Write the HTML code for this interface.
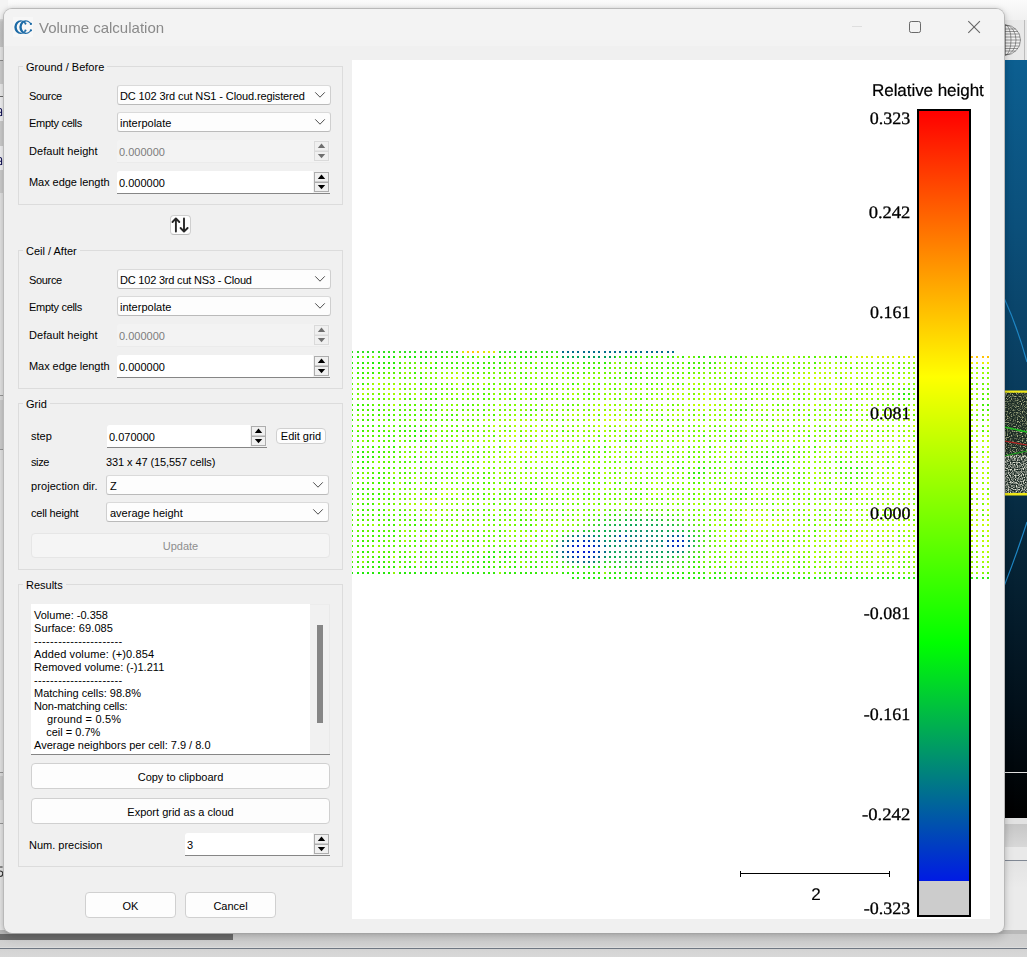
<!DOCTYPE html>
<html><head><meta charset="utf-8"><title>Volume calculation</title>
<style>
*{box-sizing:border-box;margin:0;padding:0}
html,body{width:1027px;height:957px;overflow:hidden}
body{position:relative;background:#e4e4e4;font-family:"Liberation Sans",sans-serif;font-size:11px;color:#000}
.a{position:absolute}
#dlg{position:absolute;left:3px;top:8px;width:1002px;height:926px;background:#f0f0f0;border:1px solid #b9b9b9;border-bottom-color:#a4a4a4;border-radius:9px;box-shadow:0 3px 10px rgba(0,0,0,.16),0 0 4px rgba(0,0,0,.10)}
#tbar{position:absolute;left:4px;top:9px;width:1000px;height:37px;background:#f3f3f3;border-radius:8px 8px 0 0}
#title{opacity:.999;position:absolute;left:39px;top:19px;font-size:15px;line-height:17px;color:#8a8a8a;white-space:pre}
.gb{position:absolute;border:1px solid #dcdcdc}
.gt{position:absolute;background:#f0f0f0;padding:0 3px;white-space:pre;line-height:13px}
.lb{position:absolute;white-space:pre;line-height:13px}
.cb{position:absolute;background:#fdfdfd;border:1px solid #cfcfcf;border-top-color:#dadada;border-bottom-color:#bababa;border-radius:3px}
.sp{position:absolute;background:#fff;border-bottom:1px solid #868686;border-radius:3px 3px 0 0}
.sp.dis{background:#f3f3f3;border-bottom:1px solid #ebebeb}
.btn{position:absolute;background:#fdfdfd;border:1px solid #d0d0d0;border-radius:4px}
.ctr{text-align:center}
.sv{opacity:.999;font-family:"Liberation Serif",serif;font-size:17.5px;line-height:20px;white-space:pre;letter-spacing:0;-webkit-text-stroke:0.3px #000;text-rendering:geometricPrecision;transform:translateY(-0.45px) scaleX(1.025);transform-origin:100% 50%}
</style></head><body>
<div class="a" style="left:0;top:0;width:1027px;height:60px;background:linear-gradient(180deg,#fbfbfb 0,#f6f6f6 10px,#f1f1f1 20px,#ececec 60px)"></div>
<div class="a" style="left:0;top:0;width:8px;height:957px;background:linear-gradient(180deg,#f4f4f4 0,#f4f4f4 19px,#dedede 19px,#cbcbcb 22px,#c6c6c6 35px,#c6c6c6 35px,#c9c9c9 47px,#e9e9e9 47px,#e9e9e9 60px,#8e8e8e 60px,#8e8e8e 61px,#cfcfcf 61px,#cfcfcf 84px,#efefef 84px,#efefef 96px,#6e6e6e 96px,#6e6e6e 97px,#f4f4f6 97px,#f4f4f6 121px,#cfcfcf 121px,#cfcfcf 146px,#f4f4f6 146px,#f4f4f6 170px,#cfcfcf 170px,#cfcfcf 193px,#e6e6e6 193px,#e6e6e6 395px,#9a9a9a 395px,#9a9a9a 396px,#e2e2e2 396px,#e2e2e2 400px,#d0d0d0 400px,#d0d0d0 449px,#9a9a9a 449px,#9a9a9a 450px,#e6e6e6 450px,#e6e6e6 772px,#9a9a9a 772px,#9a9a9a 773px,#e0e0e0 773px,#e0e0e0 776px,#cdcdcd 776px,#cdcdcd 800px,#e2e2e2 800px,#e2e2e2 823px,#9a9a9a 823px,#9a9a9a 824px,#e8e8e8 824px,#e8e8e8 957px)"></div>
<svg class="a" style="left:0;top:104px" width="3" height="62" viewBox="0 0 3 62"><path d="M0 4.5Q1.6 4.5 1.6 6.5V12M0 8.2Q1.6 8 1.6 9.5M0 11.8Q1.4 11.8 1.6 10.5M0 53.5Q1.6 53.5 1.6 55.5V61M0 57.2Q1.6 57 1.6 58.5M0 60.8Q1.4 60.8 1.6 59.5" fill="none" stroke="#15155a" stroke-width="1.1"/></svg>
<svg class="a" style="left:0;top:866px" width="4" height="12" viewBox="0 0 4 12"><path d="M0 1H2.6M0 5Q2.8 5 2.8 7.5Q2.8 10.5 0 10.5" fill="none" stroke="#333" stroke-width="1.1"/></svg>
<div class="a" style="left:1000px;top:20px;width:27px;height:40px;background:#e9e9e9"></div>
<div class="a" style="left:1024px;top:20px;width:1px;height:40px;background:#bdbdbd"></div>
<svg class="a" style="left:985px;top:23px" width="40" height="34" viewBox="0 0 40 34"><circle cx="20.5" cy="17" r="15" fill="#f2f2f2"/><g fill="none" stroke="#4a4a4a" stroke-width="0.55"><circle cx="20.5" cy="17" r="15"/><ellipse cx="20.5" cy="17" rx="10.5" ry="15"/><ellipse cx="20.5" cy="17" rx="5.5" ry="15"/><path d="M20.5 2V32M5.5 17H35.5M6.8 11H34.2M6.8 23H34.2M10.5 6H30.5M10.5 28H30.5M6 14H35M6 20H35M8.2 8.5H32.8M8.2 25.5H32.8"/></g></svg>
<div class="a" style="left:1000px;top:60px;width:27px;height:758px;background:linear-gradient(180deg,#0c5f91 0%,#0b4f7a 22%,#093a5a 45%,#062538 65%,#02101a 85%,#000 100%)"></div>
<svg class="a" style="left:1004px;top:60px" width="23" height="758" viewBox="1004 60 23 758"><path d="M1004.5 299 Q1017 326 1027 362M1027 522 Q1016 556 1004.5 585" fill="none" stroke="#1f86c4" stroke-width="1.2"/><filter id="pn" x="0" y="0" width="1" height="1"><feTurbulence type="fractalNoise" baseFrequency="0.85" numOctaves="1" seed="3"/><feColorMatrix type="matrix" values="0 0 0 0 0.75  0 0 0 0 0.76  0 0 0 0 0.66  3.2 0 0 0 -1.25"/></filter><filter id="pn2" x="0" y="0" width="1" height="1"><feTurbulence type="fractalNoise" baseFrequency="0.8" numOctaves="1" seed="8"/><feColorMatrix type="matrix" values="0 0 0 0 0.62  0 0 0 0 0.66  0 0 0 0 0.36  3.0 0 0 0 -1.4"/></filter><rect x="1004" y="392" width="23" height="102" fill="#1d2c26"/><rect x="1004" y="392" width="23" height="66" filter="url(#pn2)"/><rect x="1004" y="455" width="23" height="39" filter="url(#pn)"/><rect x="1004" y="390.5" width="23" height="2.2" fill="#f0e818"/><rect x="1004" y="493" width="23" height="2.5" fill="#f0e818"/><path d="M1004 427 L1027 432" stroke="#20c020" stroke-width="1.5"/><path d="M1004 441 L1027 445" stroke="#b82020" stroke-width="1.2"/><path d="M1004 456 L1027 451" stroke="#20a020" stroke-width="1.2"/><rect x="1004" y="772" width="23" height="1" fill="#e0e0e0"/></svg>
<div class="a" style="left:1000px;top:818px;width:27px;height:139px;background:linear-gradient(180deg,#e2e2e2 0,#e2e2e2 6px,#c6c6c6 6px,#d8d8d8 29px,#e9e9e9 29px,#e9e9e9 42px,#808894 42px,#808894 43px,#e3e3e3 43px,#ebebeb 70px,#ebebeb 139px)"></div>
<div class="a" style="left:0;top:930px;width:1027px;height:27px;background:linear-gradient(180deg,#b8b8b8 0,#b8b8b8 4px,#cdcdcd 4px,#d2d2d2 17px,#dcdcdc 17px,#dcdcdc 18px,#6f7782 18px,#6f7782 19px,#d3d3d3 19px,#d8d8d8 27px)"></div>
<div class="a" style="left:0;top:934px;width:233px;height:6px;background:#6c6c6c"></div>
<div id="dlg"></div><div id="tbar"></div>
<div id="title">Volume calculation</div>
<div class="gb" style="left:18px;top:66px;width:325px;height:139px"></div>
<div class="gt" style="left:23px;top:61px">Ground / Before</div>
<div class="lb" style="left:29px;top:90px;letter-spacing:-0.33px;">Source</div>
<div class="cb" style="left:117px;top:85px;width:214px;height:20px"></div>
<div class="lb" style="left:120px;top:90px;letter-spacing:-0.115px;">DC 102 3rd cut NS1 - Cloud.registered</div>
<svg class="a" style="left:313.6px;top:91.3px" width="12" height="8" viewBox="0 0 12 8"><path d="M1.5 1.6 L6 6.2 L10.5 1.6" fill="none" stroke="#454545" stroke-width="0.95" stroke-linecap="round" stroke-linejoin="round"/></svg>
<div class="lb" style="left:29px;top:117px;letter-spacing:-0.3px;">Empty cells</div>
<div class="cb" style="left:117px;top:112px;width:214px;height:20px"></div>
<div class="lb" style="left:120px;top:117px;">interpolate</div>
<svg class="a" style="left:313.6px;top:118.3px" width="12" height="8" viewBox="0 0 12 8"><path d="M1.5 1.6 L6 6.2 L10.5 1.6" fill="none" stroke="#454545" stroke-width="0.95" stroke-linecap="round" stroke-linejoin="round"/></svg>
<div class="lb" style="left:29px;top:145px;letter-spacing:0.05px;">Default height</div>
<div class="sp dis" style="left:117px;top:140px;width:213px;height:23px"></div>
<div class="lb" style="left:119px;top:146px;color:#7d7d7d">0.000000</div>
<svg class="a" style="left:314px;top:141px" width="15" height="20" viewBox="0 0 15 20"><rect x="0.5" y="0.5" width="14" height="9.5" fill="#f0f0f0" stroke="#dadada"/><rect x="0.5" y="10.5" width="14" height="9" fill="#f0f0f0" stroke="#dadada"/><path d="M3.8 7 L7.5 2.6 L11.2 7 Z" fill="#6f6f6f"/><path d="M3.8 12.9 L7.5 17.3 L11.2 12.9 Z" fill="#6f6f6f"/></svg>
<div class="lb" style="left:29px;top:176px;letter-spacing:-0.06px;">Max edge length</div>
<div class="sp" style="left:117px;top:171px;width:213px;height:23px"></div>
<div class="a" style="left:313px;top:171px;width:17px;height:22px;background:#f2f2f2"></div>
<div class="lb" style="left:119px;top:177px;">0.000000</div>
<svg class="a" style="left:314px;top:172px" width="15" height="20" viewBox="0 0 15 20"><rect x="0.5" y="0.5" width="14" height="9.5" fill="#f0f0f0" stroke="#adadad"/><rect x="0.5" y="10.5" width="14" height="9" fill="#f0f0f0" stroke="#adadad"/><path d="M3.8 7 L7.5 2.6 L11.2 7 Z" fill="#000"/><path d="M3.8 12.9 L7.5 17.3 L11.2 12.9 Z" fill="#000"/></svg>
<div class="btn" style="left:170px;top:215px;width:21px;height:20px;border-radius:4px;border-color:#cfcfcf;border-bottom-color:#bcbcbc"></div>
<svg class="a" style="left:170px;top:215px" width="21" height="20" viewBox="0 0 21 20"><path d="M5.9 16.6V3.6M2.5 7L5.9 3.4L9.3 7M14 3.4V16.4M10.6 13L14 16.6L17.6 13" fill="none" stroke="#262626" stroke-width="1.9" stroke-linecap="round" stroke-linejoin="round"/></svg>
<div class="gb" style="left:18px;top:250px;width:325px;height:139px"></div>
<div class="gt" style="left:23px;top:245px">Ceil / After</div>
<div class="lb" style="left:29px;top:274px;letter-spacing:-0.33px;">Source</div>
<div class="cb" style="left:117px;top:269px;width:214px;height:20px"></div>
<div class="lb" style="left:120px;top:274px;letter-spacing:-0.2px;">DC 102 3rd cut NS3 - Cloud</div>
<svg class="a" style="left:313.6px;top:275.3px" width="12" height="8" viewBox="0 0 12 8"><path d="M1.5 1.6 L6 6.2 L10.5 1.6" fill="none" stroke="#454545" stroke-width="0.95" stroke-linecap="round" stroke-linejoin="round"/></svg>
<div class="lb" style="left:29px;top:301px;letter-spacing:-0.3px;">Empty cells</div>
<div class="cb" style="left:117px;top:296px;width:214px;height:20px"></div>
<div class="lb" style="left:120px;top:301px;">interpolate</div>
<svg class="a" style="left:313.6px;top:302.3px" width="12" height="8" viewBox="0 0 12 8"><path d="M1.5 1.6 L6 6.2 L10.5 1.6" fill="none" stroke="#454545" stroke-width="0.95" stroke-linecap="round" stroke-linejoin="round"/></svg>
<div class="lb" style="left:29px;top:329px;letter-spacing:0.05px;">Default height</div>
<div class="sp dis" style="left:117px;top:324px;width:213px;height:23px"></div>
<div class="lb" style="left:119px;top:330px;color:#7d7d7d">0.000000</div>
<svg class="a" style="left:314px;top:325px" width="15" height="20" viewBox="0 0 15 20"><rect x="0.5" y="0.5" width="14" height="9.5" fill="#f0f0f0" stroke="#dadada"/><rect x="0.5" y="10.5" width="14" height="9" fill="#f0f0f0" stroke="#dadada"/><path d="M3.8 7 L7.5 2.6 L11.2 7 Z" fill="#6f6f6f"/><path d="M3.8 12.9 L7.5 17.3 L11.2 12.9 Z" fill="#6f6f6f"/></svg>
<div class="lb" style="left:29px;top:360px;letter-spacing:-0.06px;">Max edge length</div>
<div class="sp" style="left:117px;top:355px;width:213px;height:23px"></div>
<div class="a" style="left:313px;top:355px;width:17px;height:22px;background:#f2f2f2"></div>
<div class="lb" style="left:119px;top:361px;">0.000000</div>
<svg class="a" style="left:314px;top:356px" width="15" height="20" viewBox="0 0 15 20"><rect x="0.5" y="0.5" width="14" height="9.5" fill="#f0f0f0" stroke="#adadad"/><rect x="0.5" y="10.5" width="14" height="9" fill="#f0f0f0" stroke="#adadad"/><path d="M3.8 7 L7.5 2.6 L11.2 7 Z" fill="#000"/><path d="M3.8 12.9 L7.5 17.3 L11.2 12.9 Z" fill="#000"/></svg>
<div class="gb" style="left:18px;top:403px;width:325px;height:167px"></div>
<div class="gt" style="left:23px;top:398px">Grid</div>
<div class="lb" style="left:31px;top:430px;">step</div>
<div class="sp" style="left:107px;top:425px;width:160px;height:23px"></div>
<div class="a" style="left:250px;top:425px;width:17px;height:22px;background:#f2f2f2"></div>
<div class="lb" style="left:109px;top:431px;">0.070000</div>
<svg class="a" style="left:251px;top:426px" width="15" height="20" viewBox="0 0 15 20"><rect x="0.5" y="0.5" width="14" height="9.5" fill="#f0f0f0" stroke="#adadad"/><rect x="0.5" y="10.5" width="14" height="9" fill="#f0f0f0" stroke="#adadad"/><path d="M3.8 7 L7.5 2.6 L11.2 7 Z" fill="#000"/><path d="M3.8 12.9 L7.5 17.3 L11.2 12.9 Z" fill="#000"/></svg>
<div class="btn" style="left:276px;top:428px;width:50px;height:16px;"></div>
<div class="lb ctr" style="left:276px;width:50px;top:430px;">Edit grid</div>
<div class="lb" style="left:31px;top:456px;letter-spacing:-0.4px;">size</div>
<div class="lb" style="left:106px;top:456px;letter-spacing:-0.09px;">331 x 47 (15,557 cells)</div>
<div class="lb" style="left:31px;top:480px;letter-spacing:0.08px;">projection dir.</div>
<div class="cb" style="left:106px;top:475px;width:223px;height:20px"></div>
<div class="lb" style="left:110px;top:480px;">Z</div>
<svg class="a" style="left:311.6px;top:481.3px" width="12" height="8" viewBox="0 0 12 8"><path d="M1.5 1.6 L6 6.2 L10.5 1.6" fill="none" stroke="#454545" stroke-width="0.95" stroke-linecap="round" stroke-linejoin="round"/></svg>
<div class="lb" style="left:31px;top:507px;letter-spacing:-0.19px;">cell height</div>
<div class="cb" style="left:106px;top:502px;width:223px;height:20px"></div>
<div class="lb" style="left:110px;top:507px;">average height</div>
<svg class="a" style="left:311.6px;top:508.29999999999995px" width="12" height="8" viewBox="0 0 12 8"><path d="M1.5 1.6 L6 6.2 L10.5 1.6" fill="none" stroke="#454545" stroke-width="0.95" stroke-linecap="round" stroke-linejoin="round"/></svg>
<div class="btn" style="left:31px;top:533px;width:299px;height:25px;background:#f5f5f5;border-color:#e6e6e6;"></div>
<div class="lb ctr" style="left:31px;width:299px;top:540px;color:#8e8e8e;">Update</div>
<div class="gb" style="left:18px;top:584px;width:325px;height:283px"></div>
<div class="gt" style="left:23px;top:579px">Results</div>
<div class="a" style="left:31px;top:604px;width:279px;height:150px;background:#fff"></div>
<div class="a" style="left:310px;top:604px;width:20px;height:150px;background:#f1f1f1;border-right:1px solid #e9e9e9;border-top:1px solid #ececec"></div>
<div class="a" style="left:31px;top:754px;width:299px;height:1px;background:#868686"></div>
<div class="a" style="left:317px;top:625px;width:6px;height:98px;background:#868686"></div>
<div class="lb" style="left:34px;top:609px;">Volume: -0.358</div>
<div class="lb" style="left:34px;top:622px;letter-spacing:0.09px;">Surface: 69.085</div>
<div class="lb" style="left:34px;top:635px;letter-spacing:0.36px;">----------------------</div>
<div class="lb" style="left:34px;top:648px;letter-spacing:0.11px;">Added volume: (+)0.854</div>
<div class="lb" style="left:34px;top:661px;letter-spacing:0.04px;">Removed volume: (-)1.211</div>
<div class="lb" style="left:34px;top:674px;letter-spacing:0.36px;">----------------------</div>
<div class="lb" style="left:34px;top:687px;">Matching cells: 98.8%</div>
<div class="lb" style="left:34px;top:700px;letter-spacing:-0.17px;">Non-matching cells:</div>
<div class="lb" style="left:34px;top:713px;letter-spacing:0.19px;">    ground = 0.5%</div>
<div class="lb" style="left:34px;top:726px;">    ceil = 0.7%</div>
<div class="lb" style="left:34px;top:739px;">Average neighbors per cell: 7.9 / 8.0</div>
<div class="btn" style="left:31px;top:763px;width:299px;height:26px;"></div>
<div class="lb ctr" style="left:31px;width:299px;top:771px;">Copy to clipboard</div>
<div class="btn" style="left:31px;top:798px;width:299px;height:26px;"></div>
<div class="lb ctr" style="left:31px;width:299px;top:806px;">Export grid as a cloud</div>
<div class="lb" style="left:29px;top:839px;">Num. precision</div>
<div class="sp" style="left:185px;top:833px;width:145px;height:23px"></div>
<div class="a" style="left:313px;top:833px;width:17px;height:22px;background:#f2f2f2"></div>
<div class="lb" style="left:187px;top:839px;">3</div>
<svg class="a" style="left:314px;top:834px" width="15" height="20" viewBox="0 0 15 20"><rect x="0.5" y="0.5" width="14" height="9.5" fill="#f0f0f0" stroke="#adadad"/><rect x="0.5" y="10.5" width="14" height="9" fill="#f0f0f0" stroke="#adadad"/><path d="M3.8 7 L7.5 2.6 L11.2 7 Z" fill="#000"/><path d="M3.8 12.9 L7.5 17.3 L11.2 12.9 Z" fill="#000"/></svg>
<div class="btn" style="left:85px;top:892px;width:91px;height:26px;"></div>
<div class="lb ctr" style="left:85px;width:91px;top:900px;">OK</div>
<div class="btn" style="left:185px;top:892px;width:91px;height:26px;"></div>
<div class="lb ctr" style="left:185px;width:91px;top:900px;">Cancel</div>
<svg class="a" style="left:840px;top:9px" width="160" height="37" viewBox="0 0 160 37"><path d="M12 17.5h10" stroke="#dedede" stroke-width="1"/><rect x="69.5" y="12.5" width="11" height="11" rx="1.8" fill="none" stroke="#6a6a6a" stroke-width="1"/><path d="M128.3 12.2l11.6 11.6M139.9 12.2l-11.6 11.6" stroke="#666" stroke-width="1.1"/></svg>
<svg class="a" style="left:13px;top:17px" width="20" height="20" viewBox="0 0 20 20"><rect width="20" height="20" fill="#f7f7f7"/><defs><clipPath id="c1"><path d="M0 0H15V6.4L10.4 7.8V12.4L15 13.8V20H0Z"/></clipPath><clipPath id="c2"><path d="M0 0H20V6.6L15.6 8V12.2L20 13.6V20H0Z"/></clipPath></defs><g fill="#1b6aa6"><g clip-path="url(#c1)"><path fill-rule="evenodd" d="M1.2999999999999998 10.1a6.4 6.8 0 1 0 12.8 0a6.4 6.8 0 1 0 -12.8 0ZM3.7 10.1a4.7 5.6 0 1 0 9.4 0a4.7 5.6 0 1 0 -9.4 0Z"/></g><g clip-path="url(#c2)"><path fill-rule="evenodd" d="M6.299999999999999 10.1a6.4 6.8 0 1 0 12.8 0a6.4 6.8 0 1 0 -12.8 0ZM8.7 10.1a4.7 5.6 0 1 0 9.4 0a4.7 5.6 0 1 0 -9.4 0Z"/></g><circle cx="12.4" cy="6.6" r="1.05"/><circle cx="12.4" cy="13.5" r="1.05"/><circle cx="17.9" cy="6.9" r="1.15"/><circle cx="17.9" cy="13.3" r="1.15"/></g></svg>
<div class="a" style="left:352px;top:60px;width:638px;height:859px;background:#fff"></div>
<svg class="a" style="left:352px;top:345px" width="638" height="240" viewBox="352 345 638 240" shape-rendering="crispEdges"><defs><mask id="mc" maskUnits="userSpaceOnUse" x="352" y="345" width="638" height="240"><rect x="351" y="345" width="2" height="240" fill="#fff"/><rect x="357" y="345" width="2" height="240" fill="#fff"/><rect x="362" y="345" width="2" height="240" fill="#fff"/><rect x="367" y="345" width="2" height="240" fill="#fff"/><rect x="372" y="345" width="2" height="240" fill="#fff"/><rect x="378" y="345" width="2" height="240" fill="#fff"/><rect x="383" y="345" width="2" height="240" fill="#fff"/><rect x="388" y="345" width="2" height="240" fill="#fff"/><rect x="393" y="345" width="2" height="240" fill="#fff"/><rect x="399" y="345" width="2" height="240" fill="#fff"/><rect x="404" y="345" width="2" height="240" fill="#fff"/><rect x="409" y="345" width="2" height="240" fill="#fff"/><rect x="414" y="345" width="2" height="240" fill="#fff"/><rect x="420" y="345" width="2" height="240" fill="#fff"/><rect x="425" y="345" width="2" height="240" fill="#fff"/><rect x="430" y="345" width="2" height="240" fill="#fff"/><rect x="435" y="345" width="2" height="240" fill="#fff"/><rect x="441" y="345" width="2" height="240" fill="#fff"/><rect x="446" y="345" width="2" height="240" fill="#fff"/><rect x="451" y="345" width="2" height="240" fill="#fff"/><rect x="456" y="345" width="2" height="240" fill="#fff"/><rect x="462" y="345" width="2" height="240" fill="#fff"/><rect x="467" y="345" width="2" height="240" fill="#fff"/><rect x="472" y="345" width="2" height="240" fill="#fff"/><rect x="477" y="345" width="2" height="240" fill="#fff"/><rect x="483" y="345" width="2" height="240" fill="#fff"/><rect x="488" y="345" width="2" height="240" fill="#fff"/><rect x="493" y="345" width="2" height="240" fill="#fff"/><rect x="499" y="345" width="2" height="240" fill="#fff"/><rect x="504" y="345" width="2" height="240" fill="#fff"/><rect x="509" y="345" width="2" height="240" fill="#fff"/><rect x="514" y="345" width="2" height="240" fill="#fff"/><rect x="520" y="345" width="2" height="240" fill="#fff"/><rect x="525" y="345" width="2" height="240" fill="#fff"/><rect x="530" y="345" width="2" height="240" fill="#fff"/><rect x="535" y="345" width="2" height="240" fill="#fff"/><rect x="541" y="345" width="2" height="240" fill="#fff"/><rect x="546" y="345" width="2" height="240" fill="#fff"/><rect x="551" y="345" width="2" height="240" fill="#fff"/><rect x="556" y="345" width="2" height="240" fill="#fff"/><rect x="562" y="345" width="2" height="240" fill="#fff"/><rect x="567" y="345" width="2" height="240" fill="#fff"/><rect x="572" y="345" width="2" height="240" fill="#fff"/><rect x="577" y="345" width="2" height="240" fill="#fff"/><rect x="583" y="345" width="2" height="240" fill="#fff"/><rect x="588" y="345" width="2" height="240" fill="#fff"/><rect x="593" y="345" width="2" height="240" fill="#fff"/><rect x="598" y="345" width="2" height="240" fill="#fff"/><rect x="604" y="345" width="2" height="240" fill="#fff"/><rect x="609" y="345" width="2" height="240" fill="#fff"/><rect x="614" y="345" width="2" height="240" fill="#fff"/><rect x="619" y="345" width="2" height="240" fill="#fff"/><rect x="625" y="345" width="2" height="240" fill="#fff"/><rect x="630" y="345" width="2" height="240" fill="#fff"/><rect x="635" y="345" width="2" height="240" fill="#fff"/><rect x="640" y="345" width="2" height="240" fill="#fff"/><rect x="646" y="345" width="2" height="240" fill="#fff"/><rect x="651" y="345" width="2" height="240" fill="#fff"/><rect x="656" y="345" width="2" height="240" fill="#fff"/><rect x="661" y="345" width="2" height="240" fill="#fff"/><rect x="667" y="345" width="2" height="240" fill="#fff"/><rect x="672" y="345" width="2" height="240" fill="#fff"/><rect x="677" y="345" width="2" height="240" fill="#fff"/><rect x="682" y="345" width="2" height="240" fill="#fff"/><rect x="688" y="345" width="2" height="240" fill="#fff"/><rect x="693" y="345" width="2" height="240" fill="#fff"/><rect x="698" y="345" width="2" height="240" fill="#fff"/><rect x="703" y="345" width="2" height="240" fill="#fff"/><rect x="709" y="345" width="2" height="240" fill="#fff"/><rect x="714" y="345" width="2" height="240" fill="#fff"/><rect x="719" y="345" width="2" height="240" fill="#fff"/><rect x="724" y="345" width="2" height="240" fill="#fff"/><rect x="730" y="345" width="2" height="240" fill="#fff"/><rect x="735" y="345" width="2" height="240" fill="#fff"/><rect x="740" y="345" width="2" height="240" fill="#fff"/><rect x="745" y="345" width="2" height="240" fill="#fff"/><rect x="751" y="345" width="2" height="240" fill="#fff"/><rect x="756" y="345" width="2" height="240" fill="#fff"/><rect x="761" y="345" width="2" height="240" fill="#fff"/><rect x="766" y="345" width="2" height="240" fill="#fff"/><rect x="772" y="345" width="2" height="240" fill="#fff"/><rect x="777" y="345" width="2" height="240" fill="#fff"/><rect x="782" y="345" width="2" height="240" fill="#fff"/><rect x="787" y="345" width="2" height="240" fill="#fff"/><rect x="793" y="345" width="2" height="240" fill="#fff"/><rect x="798" y="345" width="2" height="240" fill="#fff"/><rect x="803" y="345" width="2" height="240" fill="#fff"/><rect x="808" y="345" width="2" height="240" fill="#fff"/><rect x="814" y="345" width="2" height="240" fill="#fff"/><rect x="819" y="345" width="2" height="240" fill="#fff"/><rect x="824" y="345" width="2" height="240" fill="#fff"/><rect x="829" y="345" width="2" height="240" fill="#fff"/><rect x="835" y="345" width="2" height="240" fill="#fff"/><rect x="840" y="345" width="2" height="240" fill="#fff"/><rect x="845" y="345" width="2" height="240" fill="#fff"/><rect x="850" y="345" width="2" height="240" fill="#fff"/><rect x="856" y="345" width="2" height="240" fill="#fff"/><rect x="861" y="345" width="2" height="240" fill="#fff"/><rect x="866" y="345" width="2" height="240" fill="#fff"/><rect x="871" y="345" width="2" height="240" fill="#fff"/><rect x="877" y="345" width="2" height="240" fill="#fff"/><rect x="882" y="345" width="2" height="240" fill="#fff"/><rect x="887" y="345" width="2" height="240" fill="#fff"/><rect x="892" y="345" width="2" height="240" fill="#fff"/><rect x="898" y="345" width="2" height="240" fill="#fff"/><rect x="903" y="345" width="2" height="240" fill="#fff"/><rect x="908" y="345" width="2" height="240" fill="#fff"/><rect x="913" y="345" width="2" height="240" fill="#fff"/><rect x="919" y="345" width="2" height="240" fill="#fff"/><rect x="924" y="345" width="2" height="240" fill="#fff"/><rect x="929" y="345" width="2" height="240" fill="#fff"/><rect x="934" y="345" width="2" height="240" fill="#fff"/><rect x="940" y="345" width="2" height="240" fill="#fff"/><rect x="945" y="345" width="2" height="240" fill="#fff"/><rect x="950" y="345" width="2" height="240" fill="#fff"/><rect x="955" y="345" width="2" height="240" fill="#fff"/><rect x="961" y="345" width="2" height="240" fill="#fff"/><rect x="966" y="345" width="2" height="240" fill="#fff"/><rect x="971" y="345" width="2" height="240" fill="#fff"/><rect x="976" y="345" width="2" height="240" fill="#fff"/><rect x="982" y="345" width="2" height="240" fill="#fff"/><rect x="987" y="345" width="2" height="240" fill="#fff"/></mask><mask id="mr" maskUnits="userSpaceOnUse" x="352" y="345" width="638" height="240"><rect x="352" y="351" width="638" height="2" fill="#fff"/><rect x="352" y="356" width="638" height="2" fill="#fff"/><rect x="352" y="362" width="638" height="2" fill="#fff"/><rect x="352" y="367" width="638" height="2" fill="#fff"/><rect x="352" y="372" width="638" height="2" fill="#fff"/><rect x="352" y="377" width="638" height="2" fill="#fff"/><rect x="352" y="383" width="638" height="2" fill="#fff"/><rect x="352" y="388" width="638" height="2" fill="#fff"/><rect x="352" y="393" width="638" height="2" fill="#fff"/><rect x="352" y="398" width="638" height="2" fill="#fff"/><rect x="352" y="404" width="638" height="2" fill="#fff"/><rect x="352" y="409" width="638" height="2" fill="#fff"/><rect x="352" y="414" width="638" height="2" fill="#fff"/><rect x="352" y="419" width="638" height="2" fill="#fff"/><rect x="352" y="425" width="638" height="2" fill="#fff"/><rect x="352" y="430" width="638" height="2" fill="#fff"/><rect x="352" y="435" width="638" height="2" fill="#fff"/><rect x="352" y="440" width="638" height="2" fill="#fff"/><rect x="352" y="446" width="638" height="2" fill="#fff"/><rect x="352" y="451" width="638" height="2" fill="#fff"/><rect x="352" y="456" width="638" height="2" fill="#fff"/><rect x="352" y="461" width="638" height="2" fill="#fff"/><rect x="352" y="467" width="638" height="2" fill="#fff"/><rect x="352" y="472" width="638" height="2" fill="#fff"/><rect x="352" y="477" width="638" height="2" fill="#fff"/><rect x="352" y="482" width="638" height="2" fill="#fff"/><rect x="352" y="488" width="638" height="2" fill="#fff"/><rect x="352" y="493" width="638" height="2" fill="#fff"/><rect x="352" y="498" width="638" height="2" fill="#fff"/><rect x="352" y="503" width="638" height="2" fill="#fff"/><rect x="352" y="509" width="638" height="2" fill="#fff"/><rect x="352" y="514" width="638" height="2" fill="#fff"/><rect x="352" y="519" width="638" height="2" fill="#fff"/><rect x="352" y="524" width="638" height="2" fill="#fff"/><rect x="352" y="530" width="638" height="2" fill="#fff"/><rect x="352" y="535" width="638" height="2" fill="#fff"/><rect x="352" y="540" width="638" height="2" fill="#fff"/><rect x="352" y="545" width="638" height="2" fill="#fff"/><rect x="352" y="551" width="638" height="2" fill="#fff"/><rect x="352" y="556" width="638" height="2" fill="#fff"/><rect x="352" y="561" width="638" height="2" fill="#fff"/><rect x="352" y="566" width="638" height="2" fill="#fff"/><rect x="352" y="572" width="638" height="2" fill="#fff"/><rect x="352" y="577" width="638" height="2" fill="#fff"/></mask><clipPath id="fld"><path d="M352 351H675V356H990V579H572V577H352Z"/></clipPath><linearGradient id="gb" x1="352" x2="990" y1="0" y2="0" gradientUnits="userSpaceOnUse"><stop offset="0" stop-color="#4cf200"/><stop offset=".12" stop-color="#6cf800"/><stop offset=".3" stop-color="#80fc00"/><stop offset=".55" stop-color="#88fd00"/><stop offset=".8" stop-color="#9cff00"/><stop offset="1" stop-color="#b4ff00"/></linearGradient><linearGradient id="gv" x1="0" x2="0" y1="351" y2="579" gradientUnits="userSpaceOnUse"><stop offset="0" stop-color="#00dc10" stop-opacity=".75"/><stop offset=".05" stop-color="#10e010" stop-opacity=".5"/><stop offset=".12" stop-color="#20e800" stop-opacity="0"/><stop offset=".86" stop-color="#20e800" stop-opacity="0"/><stop offset=".95" stop-color="#10e010" stop-opacity=".45"/><stop offset="1" stop-color="#00e010" stop-opacity=".8"/></linearGradient><radialGradient id="bl"><stop offset="0" stop-color="#0010e0"/><stop offset=".4" stop-color="#0030c0"/><stop offset=".7" stop-color="#007088" stop-opacity=".9"/><stop offset="1" stop-color="#00c040" stop-opacity="0"/></radialGradient><radialGradient id="tl"><stop offset="0" stop-color="#006898" stop-opacity=".95"/><stop offset=".55" stop-color="#00a060" stop-opacity=".8"/><stop offset="1" stop-color="#20e020" stop-opacity="0"/></radialGradient><radialGradient id="ye"><stop offset="0" stop-color="#dcff00" stop-opacity=".85"/><stop offset="1" stop-color="#c8ff00" stop-opacity="0"/></radialGradient><radialGradient id="gr"><stop offset="0" stop-color="#08e410" stop-opacity=".85"/><stop offset="1" stop-color="#30f000" stop-opacity="0"/></radialGradient><pattern id="nz" x="352" y="351" width="105" height="84" patternUnits="userSpaceOnUse"><rect x="0" y="0" width="5" height="5" fill="#d0ff00" fill-opacity="0.3"/><rect x="5" y="0" width="5" height="5" fill="#d0ff00" fill-opacity="0.2"/><rect x="10" y="0" width="5" height="5" fill="#10ec00" fill-opacity="0.15"/><rect x="15" y="0" width="5" height="5" fill="#d0ff00" fill-opacity="0.2"/><rect x="25" y="0" width="5" height="5" fill="#10ec00" fill-opacity="0.15"/><rect x="30" y="0" width="5" height="5" fill="#d0ff00" fill-opacity="0.2"/><rect x="35" y="0" width="5" height="5" fill="#10ec00" fill-opacity="0.5"/><rect x="40" y="0" width="5" height="5" fill="#10ec00" fill-opacity="0.15"/><rect x="60" y="0" width="5" height="5" fill="#10ec00" fill-opacity="0.5"/><rect x="65" y="0" width="5" height="5" fill="#10ec00" fill-opacity="0.25"/><rect x="70" y="0" width="5" height="5" fill="#10ec00" fill-opacity="0.25"/><rect x="75" y="0" width="5" height="5" fill="#10ec00" fill-opacity="0.25"/><rect x="80" y="0" width="5" height="5" fill="#d0ff00" fill-opacity="0.45"/><rect x="95" y="0" width="5" height="5" fill="#10ec00" fill-opacity="0.25"/><rect x="100" y="0" width="5" height="5" fill="#d0ff00" fill-opacity="0.2"/><rect x="10" y="5" width="5" height="5" fill="#d0ff00" fill-opacity="0.6"/><rect x="20" y="5" width="5" height="5" fill="#d0ff00" fill-opacity="0.6"/><rect x="25" y="5" width="5" height="5" fill="#d0ff00" fill-opacity="0.3"/><rect x="40" y="5" width="5" height="5" fill="#10ec00" fill-opacity="0.35"/><rect x="45" y="5" width="5" height="5" fill="#d0ff00" fill-opacity="0.45"/><rect x="55" y="5" width="5" height="5" fill="#10ec00" fill-opacity="0.15"/><rect x="60" y="5" width="5" height="5" fill="#10ec00" fill-opacity="0.5"/><rect x="65" y="5" width="5" height="5" fill="#10ec00" fill-opacity="0.35"/><rect x="70" y="5" width="5" height="5" fill="#10ec00" fill-opacity="0.5"/><rect x="75" y="5" width="5" height="5" fill="#d0ff00" fill-opacity="0.2"/><rect x="95" y="5" width="5" height="5" fill="#d0ff00" fill-opacity="0.45"/><rect x="5" y="10" width="5" height="5" fill="#d0ff00" fill-opacity="0.2"/><rect x="15" y="10" width="5" height="5" fill="#d0ff00" fill-opacity="0.2"/><rect x="20" y="10" width="5" height="5" fill="#10ec00" fill-opacity="0.35"/><rect x="40" y="10" width="5" height="5" fill="#10ec00" fill-opacity="0.5"/><rect x="50" y="10" width="5" height="5" fill="#d0ff00" fill-opacity="0.6"/><rect x="55" y="10" width="5" height="5" fill="#d0ff00" fill-opacity="0.2"/><rect x="60" y="10" width="5" height="5" fill="#d0ff00" fill-opacity="0.3"/><rect x="70" y="10" width="5" height="5" fill="#10ec00" fill-opacity="0.25"/><rect x="75" y="10" width="5" height="5" fill="#d0ff00" fill-opacity="0.6"/><rect x="80" y="10" width="5" height="5" fill="#10ec00" fill-opacity="0.5"/><rect x="85" y="10" width="5" height="5" fill="#d0ff00" fill-opacity="0.45"/><rect x="0" y="15" width="5" height="5" fill="#10ec00" fill-opacity="0.5"/><rect x="15" y="15" width="5" height="5" fill="#d0ff00" fill-opacity="0.3"/><rect x="20" y="15" width="5" height="5" fill="#10ec00" fill-opacity="0.25"/><rect x="25" y="15" width="5" height="5" fill="#10ec00" fill-opacity="0.25"/><rect x="30" y="15" width="5" height="5" fill="#10ec00" fill-opacity="0.25"/><rect x="35" y="15" width="5" height="5" fill="#10ec00" fill-opacity="0.15"/><rect x="40" y="15" width="5" height="5" fill="#10ec00" fill-opacity="0.35"/><rect x="50" y="15" width="5" height="5" fill="#d0ff00" fill-opacity="0.3"/><rect x="60" y="15" width="5" height="5" fill="#d0ff00" fill-opacity="0.2"/><rect x="65" y="15" width="5" height="5" fill="#d0ff00" fill-opacity="0.6"/><rect x="70" y="15" width="5" height="5" fill="#d0ff00" fill-opacity="0.6"/><rect x="75" y="15" width="5" height="5" fill="#10ec00" fill-opacity="0.5"/><rect x="80" y="15" width="5" height="5" fill="#10ec00" fill-opacity="0.15"/><rect x="90" y="15" width="5" height="5" fill="#d0ff00" fill-opacity="0.2"/><rect x="95" y="15" width="5" height="5" fill="#d0ff00" fill-opacity="0.2"/><rect x="100" y="15" width="5" height="5" fill="#10ec00" fill-opacity="0.25"/><rect x="0" y="20" width="5" height="5" fill="#d0ff00" fill-opacity="0.45"/><rect x="10" y="20" width="5" height="5" fill="#10ec00" fill-opacity="0.25"/><rect x="20" y="20" width="5" height="5" fill="#10ec00" fill-opacity="0.35"/><rect x="35" y="20" width="5" height="5" fill="#d0ff00" fill-opacity="0.2"/><rect x="50" y="20" width="5" height="5" fill="#d0ff00" fill-opacity="0.6"/><rect x="55" y="20" width="5" height="5" fill="#d0ff00" fill-opacity="0.3"/><rect x="60" y="20" width="5" height="5" fill="#10ec00" fill-opacity="0.35"/><rect x="70" y="20" width="5" height="5" fill="#d0ff00" fill-opacity="0.3"/><rect x="75" y="20" width="5" height="5" fill="#d0ff00" fill-opacity="0.3"/><rect x="85" y="20" width="5" height="5" fill="#d0ff00" fill-opacity="0.3"/><rect x="0" y="25" width="5" height="5" fill="#10ec00" fill-opacity="0.15"/><rect x="10" y="25" width="5" height="5" fill="#10ec00" fill-opacity="0.35"/><rect x="20" y="25" width="5" height="5" fill="#d0ff00" fill-opacity="0.3"/><rect x="25" y="25" width="5" height="5" fill="#d0ff00" fill-opacity="0.45"/><rect x="50" y="25" width="5" height="5" fill="#10ec00" fill-opacity="0.25"/><rect x="65" y="25" width="5" height="5" fill="#10ec00" fill-opacity="0.5"/><rect x="70" y="25" width="5" height="5" fill="#d0ff00" fill-opacity="0.2"/><rect x="85" y="25" width="5" height="5" fill="#d0ff00" fill-opacity="0.3"/><rect x="100" y="25" width="5" height="5" fill="#d0ff00" fill-opacity="0.45"/><rect x="5" y="30" width="5" height="5" fill="#d0ff00" fill-opacity="0.3"/><rect x="10" y="30" width="5" height="5" fill="#10ec00" fill-opacity="0.5"/><rect x="15" y="30" width="5" height="5" fill="#10ec00" fill-opacity="0.25"/><rect x="20" y="30" width="5" height="5" fill="#d0ff00" fill-opacity="0.2"/><rect x="25" y="30" width="5" height="5" fill="#d0ff00" fill-opacity="0.45"/><rect x="35" y="30" width="5" height="5" fill="#10ec00" fill-opacity="0.15"/><rect x="55" y="30" width="5" height="5" fill="#d0ff00" fill-opacity="0.3"/><rect x="60" y="30" width="5" height="5" fill="#d0ff00" fill-opacity="0.45"/><rect x="65" y="30" width="5" height="5" fill="#10ec00" fill-opacity="0.5"/><rect x="70" y="30" width="5" height="5" fill="#d0ff00" fill-opacity="0.2"/><rect x="80" y="30" width="5" height="5" fill="#10ec00" fill-opacity="0.25"/><rect x="85" y="30" width="5" height="5" fill="#10ec00" fill-opacity="0.5"/><rect x="95" y="30" width="5" height="5" fill="#10ec00" fill-opacity="0.5"/><rect x="0" y="35" width="5" height="5" fill="#d0ff00" fill-opacity="0.3"/><rect x="5" y="35" width="5" height="5" fill="#10ec00" fill-opacity="0.15"/><rect x="10" y="35" width="5" height="5" fill="#d0ff00" fill-opacity="0.3"/><rect x="15" y="35" width="5" height="5" fill="#d0ff00" fill-opacity="0.3"/><rect x="25" y="35" width="5" height="5" fill="#10ec00" fill-opacity="0.35"/><rect x="30" y="35" width="5" height="5" fill="#10ec00" fill-opacity="0.25"/><rect x="40" y="35" width="5" height="5" fill="#d0ff00" fill-opacity="0.6"/><rect x="50" y="35" width="5" height="5" fill="#10ec00" fill-opacity="0.35"/><rect x="70" y="35" width="5" height="5" fill="#d0ff00" fill-opacity="0.3"/><rect x="75" y="35" width="5" height="5" fill="#d0ff00" fill-opacity="0.2"/><rect x="100" y="35" width="5" height="5" fill="#10ec00" fill-opacity="0.25"/><rect x="0" y="40" width="5" height="5" fill="#d0ff00" fill-opacity="0.2"/><rect x="10" y="40" width="5" height="5" fill="#d0ff00" fill-opacity="0.6"/><rect x="20" y="40" width="5" height="5" fill="#10ec00" fill-opacity="0.15"/><rect x="25" y="40" width="5" height="5" fill="#10ec00" fill-opacity="0.35"/><rect x="30" y="40" width="5" height="5" fill="#10ec00" fill-opacity="0.15"/><rect x="35" y="40" width="5" height="5" fill="#d0ff00" fill-opacity="0.2"/><rect x="50" y="40" width="5" height="5" fill="#d0ff00" fill-opacity="0.3"/><rect x="60" y="40" width="5" height="5" fill="#d0ff00" fill-opacity="0.6"/><rect x="65" y="40" width="5" height="5" fill="#d0ff00" fill-opacity="0.3"/><rect x="85" y="40" width="5" height="5" fill="#10ec00" fill-opacity="0.25"/><rect x="95" y="40" width="5" height="5" fill="#10ec00" fill-opacity="0.15"/><rect x="100" y="40" width="5" height="5" fill="#d0ff00" fill-opacity="0.45"/><rect x="0" y="45" width="5" height="5" fill="#10ec00" fill-opacity="0.25"/><rect x="5" y="45" width="5" height="5" fill="#d0ff00" fill-opacity="0.3"/><rect x="25" y="45" width="5" height="5" fill="#10ec00" fill-opacity="0.35"/><rect x="30" y="45" width="5" height="5" fill="#10ec00" fill-opacity="0.25"/><rect x="40" y="45" width="5" height="5" fill="#10ec00" fill-opacity="0.15"/><rect x="45" y="45" width="5" height="5" fill="#d0ff00" fill-opacity="0.6"/><rect x="50" y="45" width="5" height="5" fill="#10ec00" fill-opacity="0.25"/><rect x="55" y="45" width="5" height="5" fill="#10ec00" fill-opacity="0.5"/><rect x="65" y="45" width="5" height="5" fill="#d0ff00" fill-opacity="0.6"/><rect x="70" y="45" width="5" height="5" fill="#10ec00" fill-opacity="0.35"/><rect x="75" y="45" width="5" height="5" fill="#10ec00" fill-opacity="0.35"/><rect x="80" y="45" width="5" height="5" fill="#10ec00" fill-opacity="0.5"/><rect x="85" y="45" width="5" height="5" fill="#d0ff00" fill-opacity="0.2"/><rect x="90" y="45" width="5" height="5" fill="#d0ff00" fill-opacity="0.45"/><rect x="95" y="45" width="5" height="5" fill="#d0ff00" fill-opacity="0.2"/><rect x="100" y="45" width="5" height="5" fill="#10ec00" fill-opacity="0.25"/><rect x="5" y="50" width="5" height="5" fill="#10ec00" fill-opacity="0.35"/><rect x="10" y="50" width="5" height="5" fill="#10ec00" fill-opacity="0.25"/><rect x="15" y="50" width="5" height="5" fill="#10ec00" fill-opacity="0.25"/><rect x="40" y="50" width="5" height="5" fill="#d0ff00" fill-opacity="0.6"/><rect x="50" y="50" width="5" height="5" fill="#10ec00" fill-opacity="0.15"/><rect x="60" y="50" width="5" height="5" fill="#10ec00" fill-opacity="0.15"/><rect x="65" y="50" width="5" height="5" fill="#10ec00" fill-opacity="0.15"/><rect x="80" y="50" width="5" height="5" fill="#10ec00" fill-opacity="0.25"/><rect x="85" y="50" width="5" height="5" fill="#10ec00" fill-opacity="0.15"/><rect x="90" y="50" width="5" height="5" fill="#d0ff00" fill-opacity="0.45"/><rect x="100" y="50" width="5" height="5" fill="#d0ff00" fill-opacity="0.45"/><rect x="5" y="55" width="5" height="5" fill="#10ec00" fill-opacity="0.25"/><rect x="20" y="55" width="5" height="5" fill="#10ec00" fill-opacity="0.25"/><rect x="25" y="55" width="5" height="5" fill="#10ec00" fill-opacity="0.35"/><rect x="35" y="55" width="5" height="5" fill="#d0ff00" fill-opacity="0.3"/><rect x="40" y="55" width="5" height="5" fill="#10ec00" fill-opacity="0.25"/><rect x="45" y="55" width="5" height="5" fill="#10ec00" fill-opacity="0.15"/><rect x="55" y="55" width="5" height="5" fill="#10ec00" fill-opacity="0.15"/><rect x="70" y="55" width="5" height="5" fill="#10ec00" fill-opacity="0.5"/><rect x="75" y="55" width="5" height="5" fill="#10ec00" fill-opacity="0.5"/><rect x="80" y="55" width="5" height="5" fill="#10ec00" fill-opacity="0.5"/><rect x="90" y="55" width="5" height="5" fill="#d0ff00" fill-opacity="0.6"/><rect x="100" y="55" width="5" height="5" fill="#d0ff00" fill-opacity="0.3"/><rect x="5" y="60" width="5" height="5" fill="#d0ff00" fill-opacity="0.3"/><rect x="10" y="60" width="5" height="5" fill="#d0ff00" fill-opacity="0.45"/><rect x="25" y="60" width="5" height="5" fill="#10ec00" fill-opacity="0.35"/><rect x="30" y="60" width="5" height="5" fill="#d0ff00" fill-opacity="0.2"/><rect x="35" y="60" width="5" height="5" fill="#10ec00" fill-opacity="0.5"/><rect x="50" y="60" width="5" height="5" fill="#10ec00" fill-opacity="0.25"/><rect x="60" y="60" width="5" height="5" fill="#10ec00" fill-opacity="0.25"/><rect x="65" y="60" width="5" height="5" fill="#10ec00" fill-opacity="0.5"/><rect x="70" y="60" width="5" height="5" fill="#10ec00" fill-opacity="0.35"/><rect x="85" y="60" width="5" height="5" fill="#d0ff00" fill-opacity="0.3"/><rect x="90" y="60" width="5" height="5" fill="#10ec00" fill-opacity="0.35"/><rect x="95" y="60" width="5" height="5" fill="#10ec00" fill-opacity="0.25"/><rect x="100" y="60" width="5" height="5" fill="#10ec00" fill-opacity="0.5"/><rect x="0" y="65" width="5" height="5" fill="#10ec00" fill-opacity="0.35"/><rect x="5" y="65" width="5" height="5" fill="#d0ff00" fill-opacity="0.3"/><rect x="10" y="65" width="5" height="5" fill="#10ec00" fill-opacity="0.15"/><rect x="15" y="65" width="5" height="5" fill="#10ec00" fill-opacity="0.15"/><rect x="20" y="65" width="5" height="5" fill="#10ec00" fill-opacity="0.15"/><rect x="25" y="65" width="5" height="5" fill="#d0ff00" fill-opacity="0.45"/><rect x="30" y="65" width="5" height="5" fill="#d0ff00" fill-opacity="0.3"/><rect x="35" y="65" width="5" height="5" fill="#10ec00" fill-opacity="0.25"/><rect x="55" y="65" width="5" height="5" fill="#d0ff00" fill-opacity="0.45"/><rect x="65" y="65" width="5" height="5" fill="#d0ff00" fill-opacity="0.45"/><rect x="80" y="65" width="5" height="5" fill="#10ec00" fill-opacity="0.5"/><rect x="95" y="65" width="5" height="5" fill="#10ec00" fill-opacity="0.15"/><rect x="20" y="70" width="5" height="5" fill="#10ec00" fill-opacity="0.15"/><rect x="25" y="70" width="5" height="5" fill="#10ec00" fill-opacity="0.35"/><rect x="35" y="70" width="5" height="5" fill="#d0ff00" fill-opacity="0.6"/><rect x="60" y="70" width="5" height="5" fill="#d0ff00" fill-opacity="0.2"/><rect x="65" y="70" width="5" height="5" fill="#d0ff00" fill-opacity="0.2"/><rect x="75" y="70" width="5" height="5" fill="#d0ff00" fill-opacity="0.2"/><rect x="85" y="70" width="5" height="5" fill="#10ec00" fill-opacity="0.5"/><rect x="90" y="70" width="5" height="5" fill="#10ec00" fill-opacity="0.15"/><rect x="100" y="70" width="5" height="5" fill="#10ec00" fill-opacity="0.25"/><rect x="0" y="75" width="5" height="5" fill="#10ec00" fill-opacity="0.5"/><rect x="5" y="75" width="5" height="5" fill="#d0ff00" fill-opacity="0.6"/><rect x="10" y="75" width="5" height="5" fill="#10ec00" fill-opacity="0.35"/><rect x="30" y="75" width="5" height="5" fill="#10ec00" fill-opacity="0.25"/><rect x="35" y="75" width="5" height="5" fill="#d0ff00" fill-opacity="0.45"/><rect x="45" y="75" width="5" height="5" fill="#10ec00" fill-opacity="0.5"/><rect x="50" y="75" width="5" height="5" fill="#10ec00" fill-opacity="0.35"/><rect x="60" y="75" width="5" height="5" fill="#10ec00" fill-opacity="0.25"/><rect x="70" y="75" width="5" height="5" fill="#10ec00" fill-opacity="0.35"/><rect x="75" y="75" width="5" height="5" fill="#d0ff00" fill-opacity="0.6"/><rect x="90" y="75" width="5" height="5" fill="#d0ff00" fill-opacity="0.45"/><rect x="0" y="80" width="5" height="5" fill="#10ec00" fill-opacity="0.5"/><rect x="5" y="80" width="5" height="5" fill="#10ec00" fill-opacity="0.5"/><rect x="15" y="80" width="5" height="5" fill="#d0ff00" fill-opacity="0.3"/><rect x="20" y="80" width="5" height="5" fill="#10ec00" fill-opacity="0.15"/><rect x="25" y="80" width="5" height="5" fill="#10ec00" fill-opacity="0.35"/><rect x="35" y="80" width="5" height="5" fill="#10ec00" fill-opacity="0.35"/><rect x="50" y="80" width="5" height="5" fill="#10ec00" fill-opacity="0.5"/><rect x="55" y="80" width="5" height="5" fill="#d0ff00" fill-opacity="0.3"/><rect x="60" y="80" width="5" height="5" fill="#10ec00" fill-opacity="0.5"/><rect x="70" y="80" width="5" height="5" fill="#d0ff00" fill-opacity="0.3"/><rect x="75" y="80" width="5" height="5" fill="#d0ff00" fill-opacity="0.6"/><rect x="80" y="80" width="5" height="5" fill="#d0ff00" fill-opacity="0.45"/><rect x="85" y="80" width="5" height="5" fill="#10ec00" fill-opacity="0.35"/><rect x="95" y="80" width="5" height="5" fill="#10ec00" fill-opacity="0.25"/></pattern></defs><g mask="url(#mr)"><g mask="url(#mc)"><g clip-path="url(#fld)"><rect x="352" y="345" width="638" height="240" fill="url(#gb)"/><rect x="352" y="345" width="370" height="240" fill="url(#gv)"/><rect x="722" y="345" width="268" height="240" fill="url(#gv)" opacity=".4"/><ellipse cx="385" cy="390" rx="40" ry="18" fill="url(#ye)"/><ellipse cx="455" cy="378" rx="28" ry="12" fill="url(#ye)"/><ellipse cx="520" cy="440" rx="60" ry="40" fill="url(#ye)"/><ellipse cx="430" cy="500" rx="50" ry="22" fill="url(#ye)"/><ellipse cx="610" cy="420" rx="50" ry="30" fill="url(#ye)"/><ellipse cx="700" cy="400" rx="45" ry="25" fill="url(#ye)"/><ellipse cx="820" cy="380" rx="60" ry="22" fill="url(#ye)"/><ellipse cx="940" cy="430" rx="45" ry="40" fill="url(#ye)"/><ellipse cx="960" cy="520" rx="40" ry="40" fill="url(#ye)"/><ellipse cx="860" cy="545" rx="60" ry="20" fill="url(#ye)"/><ellipse cx="760" cy="520" rx="40" ry="18" fill="url(#ye)"/><ellipse cx="365" cy="455" rx="16" ry="10" fill="url(#gr)"/><ellipse cx="372" cy="360" rx="30" ry="8" fill="url(#gr)"/><ellipse cx="420" cy="430" rx="22" ry="12" fill="url(#gr)"/><ellipse cx="500" cy="555" rx="60" ry="14" fill="url(#gr)"/><ellipse cx="770" cy="465" rx="40" ry="28" fill="url(#gr)"/><ellipse cx="850" cy="470" rx="30" ry="20" fill="url(#gr)"/><ellipse cx="700" cy="470" rx="30" ry="16" fill="url(#gr)"/><ellipse cx="905" cy="395" rx="25" ry="14" fill="url(#gr)"/><ellipse cx="985" cy="400" rx="10" ry="40" fill="url(#gr)"/><ellipse cx="640" cy="375" rx="40" ry="10" fill="url(#gr)"/><ellipse cx="470" cy="600" rx="1" ry="1" fill="url(#gr)"/><rect x="352" y="345" width="638" height="240" fill="url(#nz)"/><ellipse cx="640" cy="541" rx="84" ry="36" fill="url(#tl)"/><ellipse cx="583" cy="549" rx="34" ry="20" fill="url(#bl)"/><ellipse cx="677" cy="543" rx="20" ry="13" fill="url(#bl)" opacity=".9"/><ellipse cx="622" cy="538" rx="12" ry="7" fill="url(#bl)" opacity=".7"/><rect x="562" y="351" width="113" height="2" fill="#006c8c"/><rect x="352" y="351" width="210" height="2" fill="#30e020"/><rect x="462" y="351" width="34" height="2" fill="#d8e800"/><rect x="467" y="351" width="12" height="2" fill="#ffc800"/><rect x="560" y="356" width="55" height="2" fill="#00a058"/><rect x="850" y="356" width="140" height="2" fill="#d8f000"/><rect x="968" y="356" width="22" height="2" fill="#ffc400"/><rect x="968" y="362" width="22" height="2" fill="#e8f000"/><rect x="572" y="577" width="418" height="2" fill="#28ee10"/></g></g></g></svg>
<div class="a" style="left:917px;top:109px;width:54px;height:808px;background:#000"></div>
<div class="a" style="left:919px;top:111px;width:50px;height:770px;background:linear-gradient(180deg,#ff0000 0px,#ffff00 266px,#00ff00 532px,#0000ff 798px)"></div>
<div class="a" style="left:919px;top:881px;width:50px;height:34px;background:#cccccc"></div>
<div class="a" style="left:872px;top:81.5px;font-size:17px;line-height:18px;white-space:pre;letter-spacing:-0.08px;-webkit-text-stroke:0.2px #000;text-rendering:geometricPrecision;transform:scaleX(1.004);transform-origin:0 50%">Relative height</div>
<div class="a sv" style="right:116.79999999999995px;top:108px;transform:translateY(-0.45px) scaleX(1.03);">0.323</div>
<div class="a sv" style="right:116.79999999999995px;top:202px;transform:translateY(-0.45px) scaleX(1.06);">0.242</div>
<div class="a sv" style="right:116.79999999999995px;top:302px;">0.161</div>
<div class="a sv" style="right:116.79999999999995px;top:403px;">0.081</div>
<div class="a sv" style="right:116.79999999999995px;top:503px;">0.000</div>
<div class="a sv" style="right:116.79999999999995px;top:603px;">-0.081</div>
<div class="a sv" style="right:116.79999999999995px;top:704px;">-0.161</div>
<div class="a sv" style="right:116.79999999999995px;top:804px;transform:translateY(-0.45px) scaleX(1.065);">-0.242</div>
<div class="a sv" style="right:116.79999999999995px;top:898px;transform:translateY(-0.45px) scaleX(1.03);">-0.323</div>
<div class="a" style="left:740px;top:873px;width:150px;height:1px;background:#000"></div>
<div class="a" style="left:740px;top:871px;width:1px;height:6px;background:#000"></div>
<div class="a" style="left:889px;top:871px;width:1px;height:6px;background:#000"></div>
<div class="a ctr" style="left:796px;width:40px;top:885.5px;font-size:17px;line-height:18px;-webkit-text-stroke:0.2px #000;text-rendering:geometricPrecision;transform:scaleX(1.004);transform-origin:0 50%">2</div>
</body></html>
